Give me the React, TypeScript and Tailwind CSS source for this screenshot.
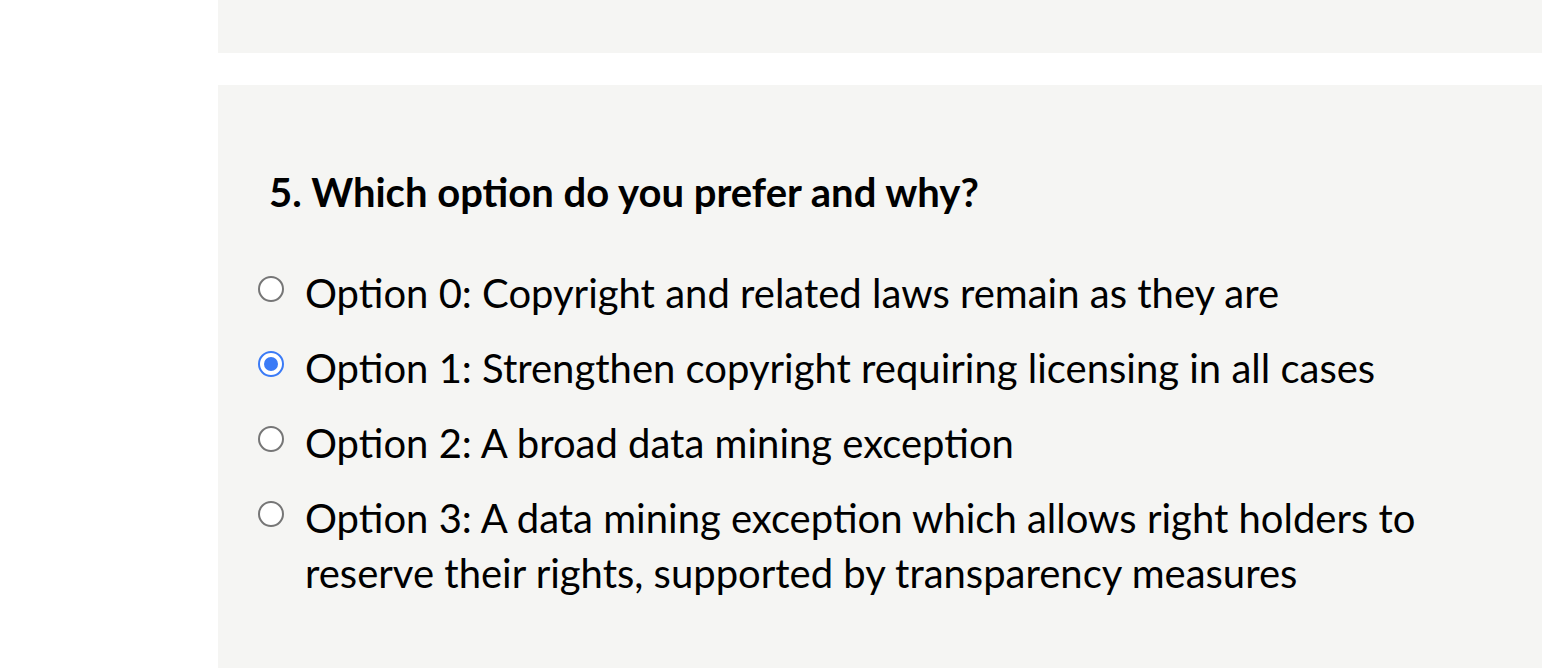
const options = [
  'Option 0: Copyright and related laws remain as they are',
  'Option 1: Strengthen copyright requiring licensing in all cases',
  'Option 2: A broad data mining exception',
  'Option 3: A data mining exception which allows right holders to reserve their rights, supported by transparency measures',
];

function Radio({ checked }: { checked: boolean }) {
  if (checked) {
    return (
      <span className="mt-[10px] flex h-[26px] w-[26px] shrink-0 items-center justify-center rounded-full border-[2px] border-[#3b7bf6] bg-white">
        <span className="h-[14px] w-[14px] rounded-full bg-[#3b7bf6]" />
      </span>
    );
  }
  return <span className="mt-[10px] block h-[26px] w-[26px] shrink-0 rounded-full border-[2px] border-[#767676] bg-white" />;
}

export default function App() {
  const selected = 1;
  return (
    <main className="min-h-screen bg-white pl-[218px] font-['Lato','Liberation_Sans',sans-serif] text-black">
      <div className="h-[53px] bg-[#f5f5f3]" />
      <section className="mt-[32px] min-h-[583px] bg-[#f5f5f3] pl-[40px] pt-[80px]">
        <h2 className="pl-[11px] text-[40px] font-bold leading-[54px]">5. Which option do you prefer and why?</h2>
        <div className="mt-[47px] flex max-w-[1200px] flex-col gap-[20px]">
          {options.map((o, i) => (
            <label key={i} className="flex items-start gap-[21px]">
              <Radio checked={i === selected} />
              <span className="text-[40px] leading-[55px]">{o}</span>
            </label>
          ))}
        </div>
      </section>
    </main>
  );
}
